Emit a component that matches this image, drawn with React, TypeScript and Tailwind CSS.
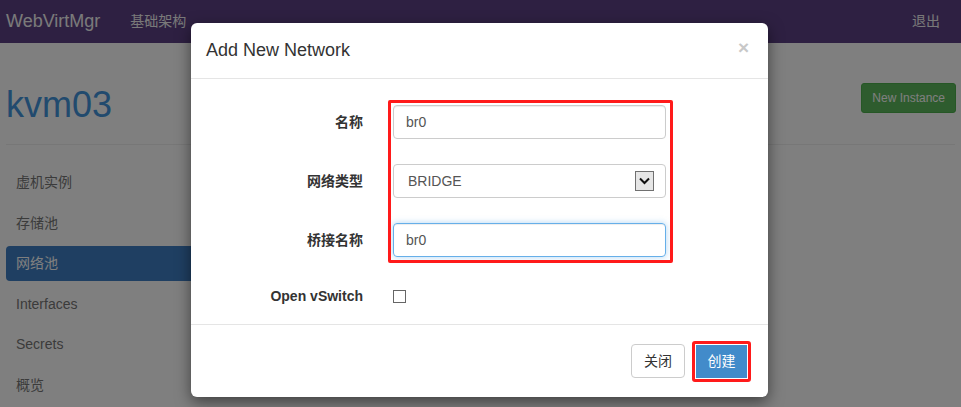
import { useState } from "react";

const sideItems = ["虚机实例", "存储池", "网络池", "Interfaces", "Secrets", "概览"];

const Field = ({ label, children, className = "" }: { label: string; children: React.ReactNode; className?: string }) => (
  <div className={`grid grid-cols-[167px_303px] items-center ${className}`}>
    <label className="pr-[15px] text-right text-[14px] font-bold text-[#333]">{label}</label>
    <div className="px-[15px]">{children}</div>
  </div>
);

const App = () => {
  const [ovs, setOvs] = useState(false);

  return (
    <div
      className="relative h-[407px] w-[961px] overflow-hidden bg-white text-[14px] text-[#333]"
      style={{ fontFamily: '"Liberation Sans", Arial, "Noto Sans CJK SC", sans-serif' }}
    >
      {/* navbar */}
      <nav className="flex h-[43px] items-center bg-[#5c4084] px-[6px]">
        <span className="text-[18px] text-[#f5f5f5]">WebVirtMgr</span>
        <span className="ml-[30px] text-[14px] text-[#f2f2f2]">基础架构</span>
        <span className="ml-auto mr-[15px] text-[14px] text-[#f2f2f2]">退出</span>
      </nav>

      {/* page */}
      <div className="px-[6px]">
        <div className="flex items-start justify-between border-b border-[#eee] pb-[19px] pt-[42px]">
          <h1 className="text-[36px] leading-[40px] text-[#4294dc]">kvm03</h1>
          <button className="mr-[-1px] mt-[-2px] h-[30px] rounded-[3px] border border-[#4cae4c] bg-[#5cb85c] px-[10px] text-[12px] text-white">
            New Instance
          </button>
        </div>
        <ul className="mt-[20px] w-[300px]">
          {sideItems.map((item, i) => (
            <li
              key={item}
              className={`flex h-[35px] items-center rounded-[4px] px-[10px] ${
                i > 0 ? "mt-[5.6px]" : ""
              } ${i === 2 ? "bg-[#3e7ec4] text-white" : "text-[#777]"}`}
            >
              {item}
            </li>
          ))}
        </ul>
      </div>

      {/* backdrop */}
      <div className="absolute inset-0 bg-black/50" />

      {/* modal */}
      <div className="absolute left-[191px] top-[23px] w-[577px] rounded-[6px] bg-white shadow-[0_5px_15px_rgba(0,0,0,0.5)]">
        <div className="flex h-[56px] items-center justify-between border-b border-[#e5e5e5] px-[15px]">
          <h4 className="text-[18px] text-[#333]">Add New Network</h4>
          <span className="mb-[6px] mr-[4px] text-[19px] font-bold leading-none text-[#c8c8c8]">×</span>
        </div>

        <div className="relative flex h-[245px] flex-col gap-[25px] px-[20px] pt-[26px]">
          <Field label="名称">
            <input
              readOnly
              value="br0"
              className="h-[34px] w-full rounded-[4px] border border-[#ccc] px-[12px] text-[14px] text-[#555] shadow-[inset_0_1px_1px_rgba(0,0,0,0.075)] outline-none"
            />
          </Field>
          <Field label="网络类型">
            <div className="flex h-[34px] w-full items-center justify-between rounded-[4px] border border-[#ccc] pl-[14px] pr-[11px] text-[14px] text-[#555]">
              <span>BRIDGE</span>
              <span className="flex h-[20px] w-[19px] items-center justify-center border border-[#707070] bg-[#e6e6e6]">
                <svg width="11" height="8" viewBox="0 0 11 8">
                  <path d="M1 1.5 L5.5 6 L10 1.5" fill="none" stroke="#111" strokeWidth="2" />
                </svg>
              </span>
            </div>
          </Field>
          <Field label="桥接名称">
            <input
              readOnly
              value="br0"
              className="h-[34px] w-full rounded-[4px] border border-[#66afe9] px-[12px] text-[14px] text-[#555] shadow-[inset_0_1px_1px_rgba(0,0,0,0.075),0_0_6px_rgba(102,175,233,0.5)] outline-none"
            />
          </Field>
          <Field label="Open vSwitch" className="mt-[4px]">
            <div className="flex h-[20px] items-center">
              <input
                type="checkbox"
                checked={ovs}
                onChange={() => setOvs(!ovs)}
                className="h-[13px] w-[13px] appearance-none border border-[#666] bg-white"
              />
            </div>
          </Field>

          {/* highlight */}
          <div className="pointer-events-none absolute left-[197px] top-[21px] h-[163px] w-[285px] rounded-[2px] border-[3px] border-[#ff1a1a]" />
        </div>

        <div className="flex h-[73px] items-center justify-end gap-[7px] border-t border-[#e5e5e5] px-[17px]">
          <button className="h-[34px] w-[54px] rounded-[4px] border border-[#ccc] bg-white text-[14px] text-[#333]">
            关闭
          </button>
          <span className="rounded-[3px] border-[3px] border-[#ff1a1a] p-[1px]">
            <button className="block h-[33px] w-[51px] bg-[#428bca] text-[14px] text-white">创建</button>
          </span>
        </div>
      </div>
    </div>
  );
};

export default App;
